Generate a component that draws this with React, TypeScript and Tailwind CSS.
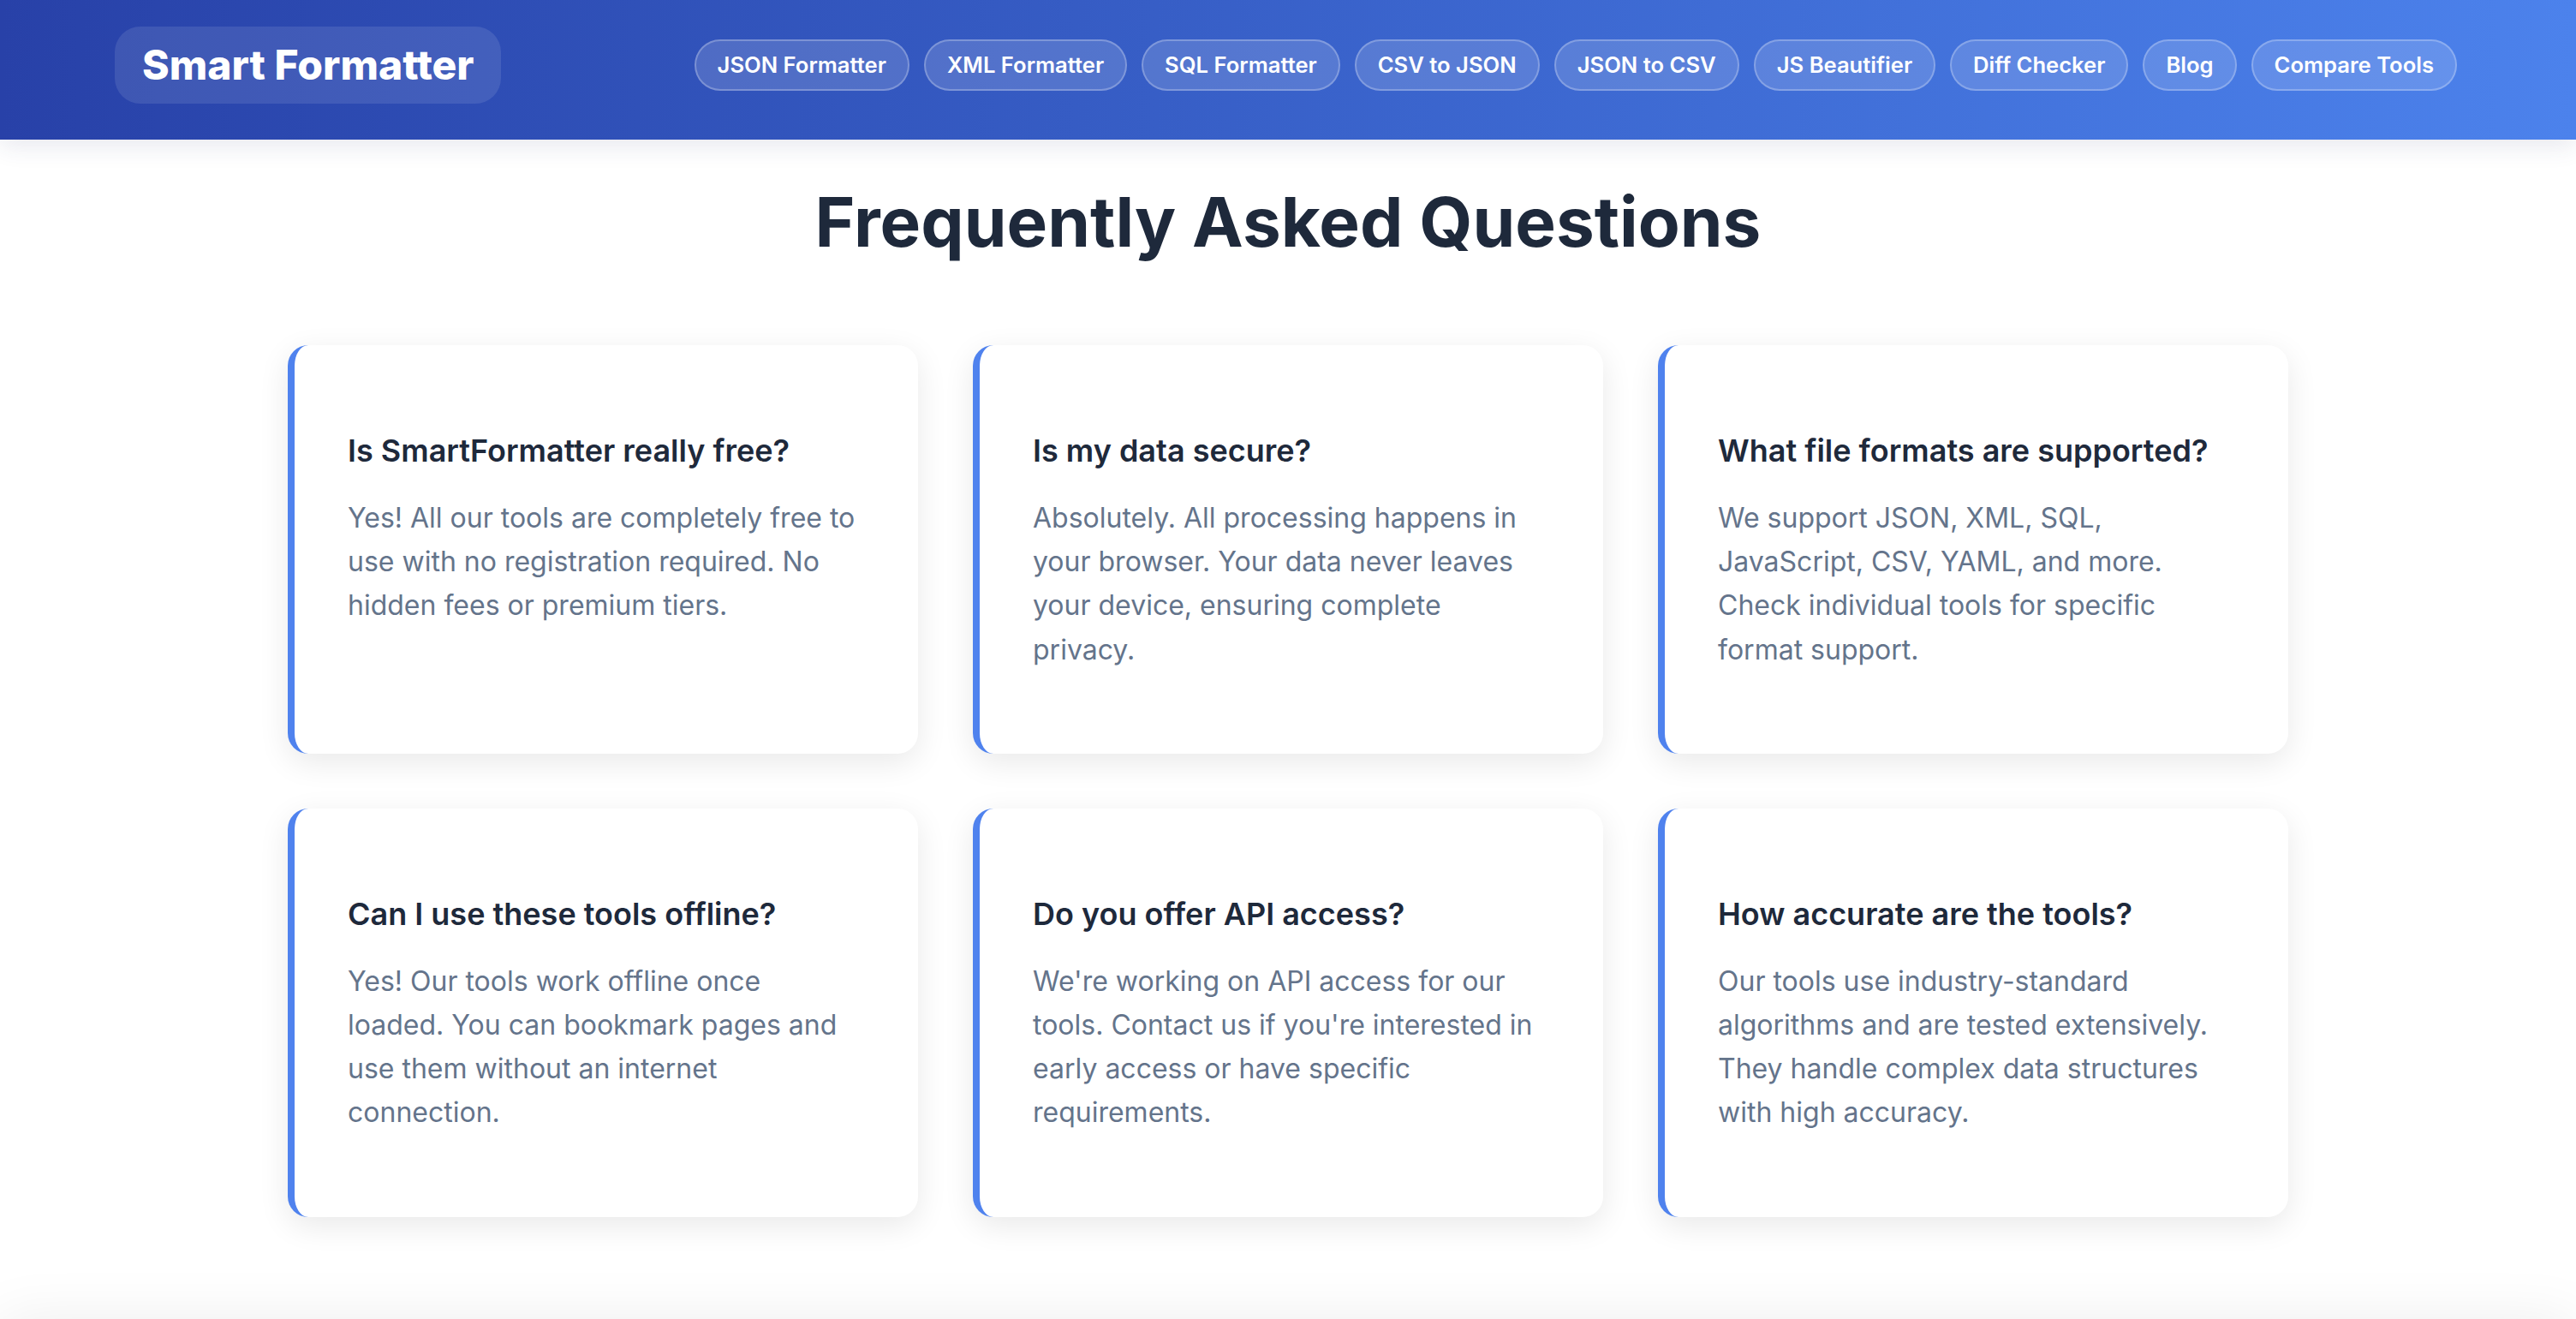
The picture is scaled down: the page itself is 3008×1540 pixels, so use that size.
const navLinks = [
  "JSON Formatter",
  "XML Formatter",
  "SQL Formatter",
  "CSV to JSON",
  "JSON to CSV",
  "JS Beautifier",
  "Diff Checker",
  "Blog",
  "Compare Tools",
];

const faqs = [
  {
    q: "Is SmartFormatter really free?",
    a: "Yes! All our tools are completely free to use with no registration required. No hidden fees or premium tiers.",
  },
  {
    q: "Is my data secure?",
    a: "Absolutely. All processing happens in your browser. Your data never leaves your device, ensuring complete privacy.",
  },
  {
    q: "What file formats are supported?",
    a: "We support JSON, XML, SQL, JavaScript, CSV, YAML, and more. Check individual tools for specific format support.",
  },
  {
    q: "Can I use these tools offline?",
    a: "Yes! Our tools work offline once loaded. You can bookmark pages and use them without an internet connection.",
  },
  {
    q: "Do you offer API access?",
    a: "We're working on API access for our tools. Contact us if you're interested in early access or have specific requirements.",
  },
  {
    q: "How accurate are the tools?",
    a: "Our tools use industry-standard algorithms and are tested extensively. They handle complex data structures with high accuracy.",
  },
];

export default function App() {
  return (
    <div className="min-h-screen overflow-hidden bg-white font-['Inter',sans-serif] text-[#1e293b]">
      <header className="relative z-10 bg-linear-to-r from-[#2841a8] to-[#4c82ec] shadow-[0_6px_28px_rgba(40,50,110,0.12)]">
        <div className="flex items-center justify-between pt-[31px] pb-[42px] pl-[134px] pr-[139px]">
          <a
            href="#"
            className="rounded-[30px] bg-white/10 px-[32px] py-[16px] text-[48px] font-extrabold leading-[58px] text-white"
          >
            Smart Formatter
          </a>
          <nav className="flex items-center gap-[17px]">
            {navLinks.map((link) => (
              <a
                key={link}
                href="#"
                className="rounded-full border-2 border-white/25 bg-white/15 px-[25px] py-[9px] text-[25.6px] font-semibold leading-[38px] text-white"
              >
                {link}
              </a>
            ))}
          </nav>
        </div>
      </header>

      <main className="mx-auto max-w-[2400px] px-[32px] pt-[48px]">
        <h2 className="text-center text-[80px] font-bold leading-[96px] text-[#1e293b]">
          Frequently Asked Questions
        </h2>
        <div className="mt-[96px] grid grid-cols-3 gap-[64px]">
          {faqs.map((item) => (
            <div
              key={item.q}
              className="rounded-[24px] border-l-[8px] border-[#4f82ee] bg-white pl-[62px] pr-[64px] pt-[101px] pb-[96px] shadow-[0_10px_36px_rgba(0,0,0,0.09)]"
            >
              <h3 className="mb-[31px] text-[36px] font-semibold leading-[44px] text-[#1e293b]">{item.q}</h3>
              <p className="text-[32px] leading-[51.2px] text-[#64748b]">{item.a}</p>
            </div>
          ))}
        </div>
      </main>

      <footer className="mt-[122px] h-[200px] bg-white shadow-[0_0_70px_rgba(0,0,0,0.08)]" />
    </div>
  );
}
